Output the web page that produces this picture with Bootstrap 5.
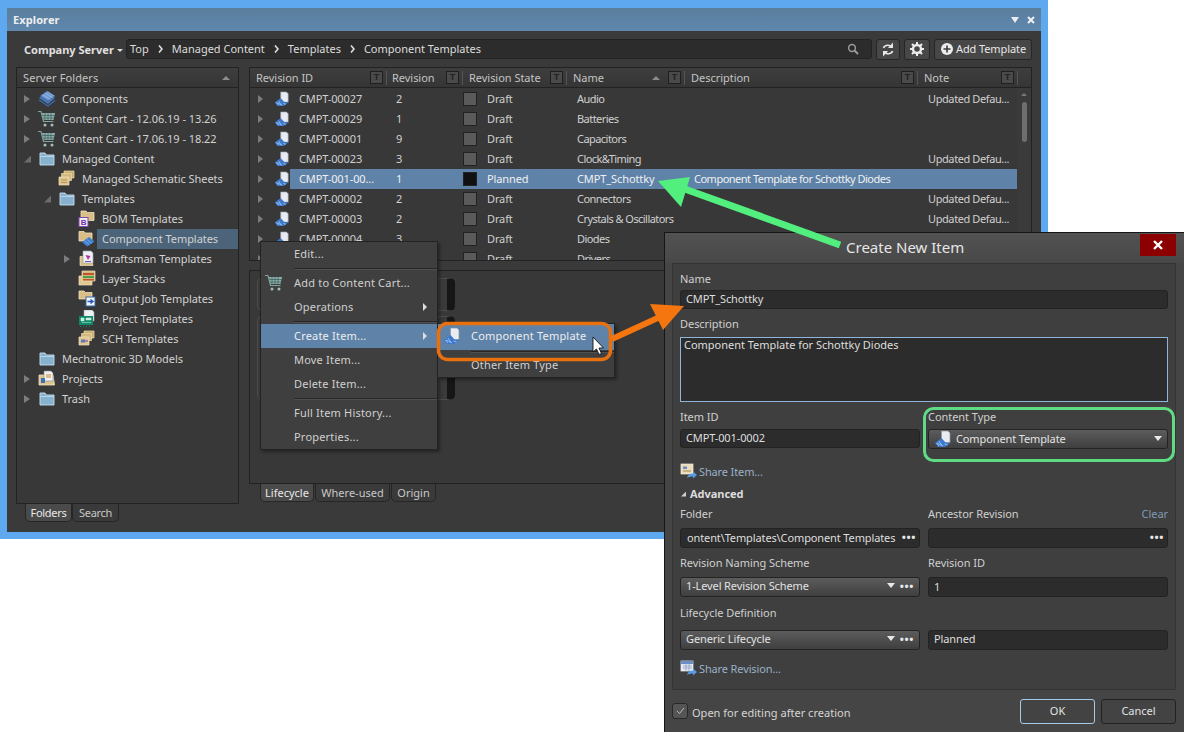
<!DOCTYPE html>
<html lang="en">
<head>
<meta charset="utf-8">
<title>Explorer</title>
<link href="https://cdn.jsdelivr.net/npm/bootstrap@5.3.0/dist/css/bootstrap.min.css" rel="stylesheet">
<style>
html,body{margin:0;background:#fff;height:732px;overflow:hidden}
body{font-family:"Noto Sans","Liberation Sans",sans-serif;font-size:11px;line-height:14px;color:#d6d6d6}
.stage{position:relative;width:1184px;height:732px;overflow:hidden}
.ico{width:18px;height:18px;flex:none;display:block}
/* Explorer window */
.explorer{position:absolute;left:0;top:0;width:1048px;height:539px;background:#5ea8ef;border:solid #5ea8ef;border-width:8px 7px 7px 7px;padding:0}
.explorer-in{height:100%;background:#3a3a3a;display:flex;flex-direction:column}
.titlebar{height:23px;flex:none;background:linear-gradient(#5a7d9c,#5f88ae);padding:0 6px;color:#eee;font-weight:700;letter-spacing:.1px}
.titlebar svg{display:block}
.tbar{height:36px;flex:none;padding:8px 9px 0 17px;gap:4px}
.server{width:98px;font-weight:700;color:#e0e0e0;letter-spacing:0;flex:none;white-space:nowrap}
.caret-sm{display:inline-block;border:3px solid transparent;border-top-color:#ddd;border-bottom:0;margin-left:3px;vertical-align:2px}
.crumb{flex:1;height:20px;background:#2c2c2c;border:1px solid #222;border-radius:3px;padding:0 12px 0 3px;color:#dcdcdc;letter-spacing:0;gap:9px}
.chev{width:5px;height:8px;flex:none;display:block}
.tb-btn{height:21px;background:#474747;border:1px solid #262626;border-radius:3px;padding:0 0 1px;color:#e6e6e6;font-size:11px;line-height:18px;--bs-btn-hover-bg:#474747}
.tb-sync{width:24px}.tb-gear{width:26px}.tb-add{width:98px;letter-spacing:-.1px;padding-left:6px;gap:3px}
.panes{flex:1;min-height:0;padding:0 9px 0 9px;gap:10px}
.pane{background:#383838;border:1px solid #222;position:relative}
.left-col{width:223px;flex:none;display:flex;flex-direction:column}
.left-pane{height:437px}
.phead{height:20px;background:linear-gradient(#3e3e3e,#353535);border-bottom:1px solid #222;padding-left:6px;color:#c4c4c4;letter-spacing:.1px}
.sort-up{width:0;height:0;border:4px solid transparent;border-bottom-color:#8c8c8c;border-top:0;display:block}
.tree{padding:1px 0 0 0;background:transparent;border-radius:0}
.tree .list-group-item{background:transparent;border:0;padding:0 0 0 7px;height:20px;color:#d2d2d2;display:flex;align-items:center;letter-spacing:-.05px;white-space:nowrap;border-radius:0}
.tree .l1{padding-left:27px}.tree .l2{padding-left:47px}
.tw{width:14px;flex:none}
.ar{display:block;width:0;height:0;border-left:6px solid #7c7c7c;border-top:4px solid transparent;border-bottom:4px solid transparent}
.ar-o{display:block;width:7px;height:7px;background:#6c6c6c;clip-path:polygon(100% 0,100% 100%,0 100%)}
.lbl{flex:1;height:20px;padding-left:5px;line-height:20px}
.tree .ico{margin-right:1px}
.sel-tree{background:#4c6479}
.tabs-b{gap:0;padding-left:9px}
.tabs-b .btn{background:#3a3a3a;border:1px solid #262626;border-top:0;border-radius:0 0 5px 5px;height:18px;padding:0;font-size:11px;line-height:16px;color:#c8c8c8}
.tabs-b .on{background:#4a4a4a;color:#e8e8e8}
.tabs-l .btn{width:47px;letter-spacing:-.3px}
.t-life{width:54px;margin-right:1px}.t-where{width:75px;margin-right:1px}.t-orig{width:45px}
.right-col{flex:1;min-width:0;position:relative}
.grid-pane{height:194px;overflow:hidden}
.gh{letter-spacing:-.03px}
.hc{flex:none;height:19px;position:relative}
.hc>span:first-child{margin-right:auto}
.tbox{width:13px;height:13px;border:1px solid #1f1f1f;background:#4a4a4a;color:#222;font-size:9px;line-height:11px;text-align:center;font-weight:700;font-style:normal;display:block;margin-right:3px;font-family:"Liberation Sans",sans-serif}
.tsep{width:1px;height:14px;background:#555;display:block}
.c0{width:137px;padding-left:6px}.c1{width:76px;padding-left:5px}.c2{width:104px;padding-left:6px}.c3{width:118px;padding-left:6px}.c4{width:233px;padding-left:6px}.c5{width:100px;padding-left:6px}
.grid-rows{padding-top:1px}
.row-g{height:20px;padding-left:8px;color:#d0d0d0;letter-spacing:-.12px;width:768px;white-space:nowrap}
.row-g .tw{width:16px}
.row-g .ar{border-left-width:5px}
.row-g .ico{width:16px;height:18px}
.cell{height:20px;line-height:20px;flex:none}
.gl{width:102px;padding-left:9px}.gr{width:67px;padding-left:4px}.gs{width:114px;padding-left:4px;display:flex;align-items:center}.gn{width:117px;padding-left:4px;letter-spacing:-.55px}.gd{width:234px;padding-left:4px;letter-spacing:-.5px}.gt{width:94px;padding-left:4px;letter-spacing:-.4px}
.sw{width:14px;height:14px;background:#5a5a5a;border:1px solid #222;margin-right:10px;flex:none}
.sel-row .cell{background:#5e82a8;color:#f0f0f0}
.sel-row .gn{letter-spacing:-.1px}
.sel-row .sw{background:#111}
.vscroll{position:absolute;right:0;top:20px;width:14px;height:173px;background:#3a3a3a}
.vscroll i{display:block;width:0;height:0;border:3px solid transparent;border-bottom-color:#777;border-top:0;margin:5px auto 6px}
.vscroll b{display:block;width:5px;height:40px;background:#6e6e6e;border-radius:3px;margin:0 auto}
.lower-pane{height:214px;margin-top:9px}
.blob{position:absolute;left:7px;width:198px;border:1px solid #4c4c4c;border-right:8px solid #161616;border-radius:5px;background:#3a3a3a}
.blob.a{top:7px;height:33px}.blob.b{top:45px;height:84px}
.tabs-r{padding-left:11px}
/* menus */
.ctx{--bs-dropdown-min-width:0;display:block;position:absolute;margin:0;padding:0;border:1px solid #232323;border-radius:0;background:#3f3f3f;box-shadow:2px 2px 3px rgba(0,0,0,.35);font-size:11px;z-index:5}
.ctx-main{left:260px;top:241px;width:178px}
.ctx-sub{left:437px;top:323px;width:178px}
.ctx .dropdown-item{height:24px;line-height:24px;padding:0 0 0 33px;color:#d0d0d0;position:relative;letter-spacing:.2px}
.ctx .active{background:#5e82a8;color:#eee}
.ctx hr{margin:2px 0 2px 33px;border:0;opacity:1;height:1px;background:#262626;box-shadow:0 1px 0 #505050}
.ctx .mi-h{height:26px;line-height:24px}
.mi-ar{position:absolute;right:10px;top:8px;border-left:4px solid #ddd;border-top:4px solid transparent;border-bottom:4px solid transparent;width:0;height:0}
.mi-ico{position:absolute;left:4px;top:3px}
.ctx-sub .dropdown-item{height:24px}
.ctx-sub .mi-h{height:26px}
.ctx-sub .mi-ico{left:5px;top:3px}
.ctx-sub hr{margin:1px 0 1px 33px}
/* dialog */
.dlg{position:absolute;left:664px;top:232px;width:520px;height:500px;background:#454545;border:1px solid #161616;border-width:1px 0 0 1px;border-radius:0;z-index:6;display:flex;flex-direction:column}
.dlg-title{height:30px;flex:none;background:linear-gradient(#525252,#484848);position:relative;text-align:center;font-size:15px;line-height:29px;color:#e6e6e6;padding:0;border:0;border-radius:0;display:block}
.dlg-title span{position:absolute;left:181px;top:0}
.dlg-x{position:absolute;left:475px;top:1px;width:36px;height:22px;background:#8b0000;border:0;border-radius:0;padding:0;display:flex;align-items:center;justify-content:center}
.dlg-body{height:427px;flex:none;margin:0 8px 0 7px;background:#3f3f3f;border:1px solid #343434;padding:8px 7px 0 7px;display:block}
.lab{margin:0;height:14px;line-height:14px;color:#cfcfcf;letter-spacing:-.05px;display:block;font-size:11px}
.fc{display:block;width:100%;height:19px;padding:0 5px 2px;background:#2c2c2c;border:1px solid #232323;border-radius:3px;color:#dedede;font-size:11px;line-height:15px;letter-spacing:-.12px;box-shadow:none;white-space:nowrap}
.fc:focus{background:#2c2c2c;color:#dedede;border-color:#232323;box-shadow:none}
.ta{height:65px;border:1px solid #8fb6da;border-radius:0;padding:0 3px;resize:none;line-height:14px;background:#2c2c2c;display:block;margin-top:6px;letter-spacing:-.02px}
.ta:focus{border-color:#8fb6da}
.sel{background:linear-gradient(#5c5c5c,#3f3f3f);border:1px solid #232323;border-radius:3px;height:20px;padding:0 5px 1px;line-height:17px;color:#e2e2e2;letter-spacing:-.12px;display:flex;align-items:center;white-space:nowrap}
.sel.f-in7,.sel.f-in10{padding-bottom:3px}
.sel .tri{width:0;height:0;border:4px solid transparent;border-top:5px solid #e8e8e8;border-bottom:0;margin-left:auto}
.dots{color:#e8e8e8;font-weight:700;letter-spacing:.6px;font-size:11px;line-height:10px;margin-left:5px}
.two{display:grid;grid-template-columns:240px 240px;column-gap:8px}
.share{color:#9ab0c8;height:20px;letter-spacing:-.13px;text-decoration:none;gap:1px}
.adv{font-weight:700;color:#dcdcdc;height:14px;letter-spacing:-.03px}
.adv i{display:block;width:5px;height:5px;background:#cfcfcf;clip-path:polygon(100% 0,100% 100%,0 100%);margin:0 4px 0 1px}
.inp-r{position:relative;padding:0 26px 2px 6px;display:flex;align-items:center;overflow:hidden;letter-spacing:-.12px;height:20px}
.inp-r .dots{position:absolute;right:3px;top:3px;letter-spacing:.6px}
.clear{color:#7f9ab5}
.m-dsc{margin-top:8px}.m-item{margin-top:8px}.f-in{margin-top:5px}.m-share{margin-top:13px}.m-adv{margin-top:5px}.m-folder{margin-top:6px}.f-in7{margin-top:7px}.m-rev{margin-top:8px}.m-life{margin-top:9px}.f-in10{margin-top:10px}.m-share2{margin-top:9px}
input.f-h20{height:20px}
input.f-in10{padding-bottom:4px}
.dlg-foot{flex:1;padding:0 8px 0 7px}
.chk{width:16px;height:16px;background:#555;border:1px solid #282828;border-radius:3px;margin:0;flex:none;display:flex;align-items:center;justify-content:center}
.ftxt{margin-top:3px;letter-spacing:.02px}
.btns{gap:6px}
.dlg-btn{width:75px;height:25px;background:#434343;border:1px solid #222;border-radius:3px;color:#e2e2e2;font-size:11px;padding:0;line-height:22px;--bs-btn-hover-bg:#434343}
.dlg-btn.pri{border-color:#a6cbe9}
.overlay{position:absolute;left:0;top:0;z-index:9;pointer-events:none}
</style>
</head>
<body>
<svg width="0" height="0" class="position-absolute">
<defs>
<symbol id="i-part" viewBox="0 0 18 18"><path d="M7.500 1h6.500L16 3v9.500H7.500z" fill="#e8ebf0" stroke="#8a96a8" stroke-width=".7"/><path d="M7.500 8 1 13l3 4h7l6-4.500-5 .5z" fill="#3d78cc"/><path d="M2.500 13 5 16M5 11 8 15.500M3 13l6 3M10.500 14l3 1" stroke="#9cc4f2" stroke-width=".9" fill="none"/></symbol>
<symbol id="i-comps" viewBox="0 0 18 18"><path d="M1 8 8 3l9 5-7 6z" fill="#4a78b8"/><path d="M2 6 9 1l8 5-7 5z" fill="#6d97d2" stroke="#2e4f82" stroke-width=".6"/><path d="M4.500 4.500l8 5M7 3l8 5M9.500 1.700l7 4.500" stroke="#b6cdeb" stroke-width=".6"/><path d="M1 10l9 6 7-5.500" stroke="#3e6aa8" stroke-width="1.400" fill="none"/></symbol>
<symbol id="i-cart" viewBox="0 0 18 18"><path d="M0 1.500h3l2.500 10h10" stroke="#7ea59f" stroke-width="1.100" fill="none"/><path d="M4 3h13l-1.500 7H5.500z" fill="#8fb1ad"/><path d="M7 3v7M10 3v7M13 3v7M4.500 5.500h12M5 8h11" stroke="#3a5a58" stroke-width=".7"/><circle cx="7" cy="15" r="1.500" fill="#a8bdbb"/><circle cx="14" cy="15" r="1.500" fill="#a8bdbb"/></symbol>
<symbol id="i-fold" viewBox="0 0 18 18"><path d="M2 3h5l1.500 2H16v10H2z" fill="#86b2cf" stroke="#c9dfee" stroke-width=".9"/><path d="M2.500 6.500h13" stroke="#b8d4e6"/></symbol>
<symbol id="i-sheets" viewBox="0 0 18 18"><path d="M6 1h10v7H6z" fill="#c8ab70" stroke="#efdcae" stroke-width=".7"/><path d="M3.500 3.500h10v7h-10z" fill="#d2b87e" stroke="#efdcae" stroke-width=".7"/><path d="M1 7h10v8H1z" fill="#dec48d" stroke="#f3e4c0" stroke-width=".7"/><path d="M3 10h6M3 12.500h6" stroke="#a98a50" stroke-width=".8"/></symbol>
<symbol id="i-bom" viewBox="0 0 18 18"><path d="M3 1h5l1.500 1.500H16v8H3z" fill="#d9bf87" stroke="#f1e2bd" stroke-width=".8"/><rect x="1" y="7.500" width="9" height="9" fill="#f0ecf6" stroke="#8048b0"/><text x="5.500" y="15" font-size="8" text-anchor="middle" font-weight="700" fill="#7030a8" font-family="Liberation Sans">B</text></symbol>
<symbol id="i-ctpl" viewBox="0 0 18 18"><path d="M1 1.500h5L7.500 3H14v8H1z" fill="#d9bf87" stroke="#f1e2bd" stroke-width=".8"/><path d="M11 7 4 12l5 4.500 7.500-5z" fill="#3f7ed0"/><path d="M6.500 11l5 4M9 9.500l5 4" stroke="#8db9ef" stroke-width=".7"/></symbol>
<symbol id="i-draft" viewBox="0 0 18 18"><path d="M2 6.500h11l2 9H2z" fill="#d9bf87" stroke="#f1e2bd" stroke-width=".7"/><path d="M5 1h8l2 2v10H5z" fill="#f0f0f4" stroke="#9aa" stroke-width=".7"/><path d="M7.500 5l5 1-2.500 4z" fill="#b0359a"/><path d="M7 11.500h6" stroke="#7a5ab0"/></symbol>
<symbol id="i-layer" viewBox="0 0 18 18"><path d="M1 6h13v9H1z" fill="#e0c68f" stroke="#f3e4c0" stroke-width=".7"/><path d="M4 1h13v10H4z" fill="#d2b87e" stroke="#f1e2bd" stroke-width=".7"/><path d="M5 3h11v2H5z" fill="#c2532f"/><path d="M5 6h11v2H5z" fill="#4f9c4f"/><path d="M5 9h11v1.500H5z" fill="#c2532f"/></symbol>
<symbol id="i-out" viewBox="0 0 18 18"><path d="M1 1h5l1.500 1.500H14V9H1z" fill="#d9bf87" stroke="#f1e2bd" stroke-width=".8"/><rect x="8" y="7" width="9" height="9" fill="#f2f4f8" stroke="#3868a8"/><path d="M9.500 11.500h5M12.500 9.500l2.500 2-2.500 2" stroke="#2458b8" stroke-width="1.400" fill="none"/></symbol>
<symbol id="i-proj" viewBox="0 0 18 18"><path d="M6 0h8l2 2v9H6z" fill="#eef0f4" stroke="#9aa" stroke-width=".6"/><rect x="1" y="6" width="14" height="9" fill="#0f8a6a"/><path d="M3 8h3v3H3zM8 8h5v2H8zM4 12.500h9" fill="#cfeee2" stroke="#cfeee2" stroke-width=".5"/><path d="M2 16.500h1M5 16.500h1M8 16.500h1M11 16.500h1" stroke="#0f8a6a"/></symbol>
<symbol id="i-sch" viewBox="0 0 18 18"><path d="M6 1h10v7H6z" fill="#c8ab70" stroke="#efdcae" stroke-width=".7"/><path d="M3.500 3.500h10v7h-10z" fill="#d2b87e" stroke="#efdcae" stroke-width=".7"/><path d="M1 7h10v8H1z" fill="#dec48d" stroke="#f3e4c0" stroke-width=".7"/><path d="M3 9.500h4v3H3z" fill="#5a78c0"/><path d="M7 11h3" stroke="#8a3aa0"/></symbol>
<symbol id="i-projs" viewBox="0 0 18 18"><path d="M1 5h14l1.500 10H1z" fill="#dcc48f" stroke="#f3e4c0" stroke-width=".8"/><path d="M6 1h7l2 2v8H6z" fill="#f0f0f4" stroke="#889" stroke-width=".6"/><path d="M3 8h4v5H3z" fill="#3f6fb8"/><path d="M8 5h5M8 7h5" stroke="#c88a20"/></symbol>
<symbol id="i-share" viewBox="0 0 18 18"><rect x="1" y="1" width="12" height="10" fill="#e8dcbc" stroke="#f5eeda" stroke-width=".7"/><path d="M3 3.500h4v2.500H3z" fill="#6b8ec8"/><path d="M3 8h8" stroke="#a98a50"/><path d="M7 15c.5-3 3-4.500 6-4.500V8.500l4 3.500-4 3.500v-2c-2.500 0-4.500.5-6 1.500z" fill="#5b9be6"/></symbol>
<symbol id="i-shrev" viewBox="0 0 18 18"><rect x="1" y="1" width="12" height="10" fill="#dfe6f2" stroke="#f2f5fa" stroke-width=".7"/><path d="M1 1h12v3H1z" fill="#6c8ec6"/><path d="M3 6h9M3 8h9M6 4v7M9 4v7" stroke="#7e92b4" stroke-width=".6"/><path d="M7 15c.5-3 3-4.500 6-4.500V8.500l4 3.500-4 3.500v-2c-2.500 0-4.500.5-6 1.500z" fill="#5b9be6"/></symbol>
<symbol id="i-chev" viewBox="0 0 5 8"><path d="M1 .5 4 4 1 7.500" fill="none" stroke="#e0e0e0" stroke-width="1.600"/></symbol>
</defs>
</svg>

<div class="stage">
<div class="explorer">
<div class="explorer-in">
  <div class="titlebar d-flex align-items-center justify-content-between">
    <span>Explorer</span>
    <span class="d-flex align-items-center gap-2">
      <svg width="8" height="6" viewBox="0 0 8 6"><path d="M0 0h8L4 6z" fill="#e8eef4"/></svg>
      <svg width="8" height="8" viewBox="0 0 8 8"><path d="M1 1l6 6M7 1 1 7" stroke="#eef2f6" stroke-width="2"/></svg>
    </span>
  </div>
  <div class="tbar d-flex align-items-start">
    <div class="server lh-lg">Company Server<span class="caret-sm"></span></div>
    <div class="crumb d-flex align-items-center">
      <span>Top</span><svg class="chev"><use href="#i-chev"/></svg><span>Managed Content</span><svg class="chev"><use href="#i-chev"/></svg><span>Templates</span><svg class="chev"><use href="#i-chev"/></svg><span>Component Templates</span>
      <svg class="ms-auto" width="12" height="12" viewBox="0 0 12 12"><circle cx="5" cy="5" r="3.400" fill="none" stroke="#9a9a9a" stroke-width="1.500"/><path d="M7.500 7.500 11 11" stroke="#9a9a9a" stroke-width="2"/></svg>
    </div>
    <button class="btn tb-btn tb-sync d-flex align-items-center justify-content-center" type="button" aria-label="Refresh"><svg width="12" height="15" viewBox="0 0 12 15"><path d="M1.500 6C2 3.500 6 2.500 8.500 4" stroke="#e8e8e8" stroke-width="1.700" fill="none"/><path d="M11 .5V6H6z" fill="#e8e8e8"/><path d="M10.500 9C10 11.500 6 12.500 3.500 11" stroke="#e8e8e8" stroke-width="1.700" fill="none"/><path d="M1 14.500V9H6z" fill="#e8e8e8"/></svg></button>
    <button class="btn tb-btn tb-gear d-flex align-items-center justify-content-center" type="button" aria-label="Settings"><svg width="14" height="14" viewBox="0 0 14 14"><circle cx="7" cy="7" r="4" fill="none" stroke="#ececec" stroke-width="2.400"/><path d="M7 0v3M7 11v3M0 7h3M11 7h3M2 2l2 2M10 10l2 2M12 2l-2 2M4 10l-2 2" stroke="#ececec" stroke-width="2"/></svg></button>
    <button class="btn tb-btn tb-add d-flex align-items-center" type="button"><svg width="12" height="12" viewBox="0 0 12 12"><circle cx="6" cy="6" r="6" fill="#ececec"/><path d="M6 2.500v7M2.500 6h7" stroke="#3c3c3c" stroke-width="1.600"/></svg>Add Template</button>
  </div>
  <div class="panes d-flex">
    <div class="left-col">
      <div class="pane left-pane">
        <div class="phead d-flex align-items-center justify-content-between"><span>Server Folders</span><span class="sort-up me-2"></span></div>
        <ul class="list-group tree">
          <li class="list-group-item"><span class="tw"><i class="ar"></i></span><svg class="ico"><use href="#i-comps"/></svg><span class="lbl">Components</span></li>
          <li class="list-group-item"><span class="tw"><i class="ar"></i></span><svg class="ico"><use href="#i-cart"/></svg><span class="lbl">Content Cart - 12.06.19 - 13.26</span></li>
          <li class="list-group-item"><span class="tw"><i class="ar"></i></span><svg class="ico"><use href="#i-cart"/></svg><span class="lbl">Content Cart - 17.06.19 - 18.22</span></li>
          <li class="list-group-item"><span class="tw"><i class="ar-o"></i></span><svg class="ico"><use href="#i-fold"/></svg><span class="lbl">Managed Content</span></li>
          <li class="list-group-item l1"><span class="tw"></span><svg class="ico"><use href="#i-sheets"/></svg><span class="lbl">Managed Schematic Sheets</span></li>
          <li class="list-group-item l1"><span class="tw"><i class="ar-o"></i></span><svg class="ico"><use href="#i-fold"/></svg><span class="lbl">Templates</span></li>
          <li class="list-group-item l2"><span class="tw"></span><svg class="ico"><use href="#i-bom"/></svg><span class="lbl">BOM Templates</span></li>
          <li class="list-group-item l2"><span class="tw"></span><svg class="ico"><use href="#i-ctpl"/></svg><span class="lbl sel-tree">Component Templates</span></li>
          <li class="list-group-item l2"><span class="tw"><i class="ar"></i></span><svg class="ico"><use href="#i-draft"/></svg><span class="lbl">Draftsman Templates</span></li>
          <li class="list-group-item l2"><span class="tw"></span><svg class="ico"><use href="#i-layer"/></svg><span class="lbl">Layer Stacks</span></li>
          <li class="list-group-item l2"><span class="tw"></span><svg class="ico"><use href="#i-out"/></svg><span class="lbl">Output Job Templates</span></li>
          <li class="list-group-item l2"><span class="tw"></span><svg class="ico"><use href="#i-proj"/></svg><span class="lbl">Project Templates</span></li>
          <li class="list-group-item l2"><span class="tw"></span><svg class="ico"><use href="#i-sch"/></svg><span class="lbl">SCH Templates</span></li>
          <li class="list-group-item"><span class="tw"></span><svg class="ico"><use href="#i-fold"/></svg><span class="lbl">Mechatronic 3D Models</span></li>
          <li class="list-group-item"><span class="tw"><i class="ar"></i></span><svg class="ico"><use href="#i-projs"/></svg><span class="lbl">Projects</span></li>
          <li class="list-group-item"><span class="tw"><i class="ar"></i></span><svg class="ico"><use href="#i-fold"/></svg><span class="lbl">Trash</span></li>
        </ul>
      </div>
      <div class="tabs-b tabs-l d-flex">
        <button class="btn on" type="button">Folders</button><button class="btn" type="button">Search</button>
      </div>
    </div>
    <div class="right-col">
      <div class="pane grid-pane">
        <div class="phead gh d-flex align-items-center p-0">
          <div class="hc c0 d-flex align-items-center"><span>Revision ID</span><i class="tbox">T</i><i class="tsep"></i></div>
          <div class="hc c1 d-flex align-items-center"><span>Revision</span><i class="tbox">T</i><i class="tsep"></i></div>
          <div class="hc c2 d-flex align-items-center"><span>Revision State</span><i class="tbox">T</i><i class="tsep"></i></div>
          <div class="hc c3 d-flex align-items-center"><span>Name</span><i class="sort-up me-2"></i><i class="tbox">T</i><i class="tsep"></i></div>
          <div class="hc c4 d-flex align-items-center"><span>Description</span><i class="tbox">T</i><i class="tsep"></i></div>
          <div class="hc c5 d-flex align-items-center"><span>Note</span><i class="tbox">T</i><i class="tsep"></i></div>
        </div>
        <div class="grid-rows">
          <div class="row-g d-flex align-items-center"><span class="tw"><i class="ar"></i></span><svg class="ico"><use href="#i-part"/></svg><span class="cell gl">CMPT-00027</span><span class="cell gr">2</span><span class="cell gs"><i class="sw"></i>Draft</span><span class="cell gn">Audio</span><span class="cell gd"></span><span class="cell gt">Updated Defau...</span></div>
          <div class="row-g d-flex align-items-center"><span class="tw"><i class="ar"></i></span><svg class="ico"><use href="#i-part"/></svg><span class="cell gl">CMPT-00029</span><span class="cell gr">1</span><span class="cell gs"><i class="sw"></i>Draft</span><span class="cell gn">Batteries</span><span class="cell gd"></span><span class="cell gt"></span></div>
          <div class="row-g d-flex align-items-center"><span class="tw"><i class="ar"></i></span><svg class="ico"><use href="#i-part"/></svg><span class="cell gl">CMPT-00001</span><span class="cell gr">9</span><span class="cell gs"><i class="sw"></i>Draft</span><span class="cell gn">Capacitors</span><span class="cell gd"></span><span class="cell gt"></span></div>
          <div class="row-g d-flex align-items-center"><span class="tw"><i class="ar"></i></span><svg class="ico"><use href="#i-part"/></svg><span class="cell gl">CMPT-00023</span><span class="cell gr">3</span><span class="cell gs"><i class="sw"></i>Draft</span><span class="cell gn">Clock&amp;Timing</span><span class="cell gd"></span><span class="cell gt">Updated Defau...</span></div>
          <div class="row-g sel-row d-flex align-items-center"><span class="tw"><i class="ar"></i></span><svg class="ico"><use href="#i-part"/></svg><span class="cell gl">CMPT-001-00...</span><span class="cell gr">1</span><span class="cell gs"><i class="sw"></i>Planned</span><span class="cell gn">CMPT_Schottky</span><span class="cell gd">Component Template for Schottky Diodes</span><span class="cell gt"></span></div>
          <div class="row-g d-flex align-items-center"><span class="tw"><i class="ar"></i></span><svg class="ico"><use href="#i-part"/></svg><span class="cell gl">CMPT-00002</span><span class="cell gr">2</span><span class="cell gs"><i class="sw"></i>Draft</span><span class="cell gn">Connectors</span><span class="cell gd"></span><span class="cell gt">Updated Defau...</span></div>
          <div class="row-g d-flex align-items-center"><span class="tw"><i class="ar"></i></span><svg class="ico"><use href="#i-part"/></svg><span class="cell gl">CMPT-00003</span><span class="cell gr">2</span><span class="cell gs"><i class="sw"></i>Draft</span><span class="cell gn">Crystals &amp; Oscillators</span><span class="cell gd"></span><span class="cell gt">Updated Defau...</span></div>
          <div class="row-g d-flex align-items-center"><span class="tw"><i class="ar"></i></span><svg class="ico"><use href="#i-part"/></svg><span class="cell gl">CMPT-00004</span><span class="cell gr">3</span><span class="cell gs"><i class="sw"></i>Draft</span><span class="cell gn">Diodes</span><span class="cell gd"></span><span class="cell gt"></span></div>
          <div class="row-g d-flex align-items-center"><span class="tw"><i class="ar"></i></span><svg class="ico"><use href="#i-part"/></svg><span class="cell gl">CMPT-00005</span><span class="cell gr">3</span><span class="cell gs"><i class="sw"></i>Draft</span><span class="cell gn">Drivers</span><span class="cell gd"></span><span class="cell gt"></span></div>
        </div>
        <div class="vscroll"><i></i><b></b></div>
      </div>
      <div class="pane lower-pane">
        <div class="blob a"></div><div class="blob b"></div>
      </div>
      <div class="tabs-b tabs-r d-flex">
        <button class="btn on t-life" type="button">Lifecycle</button><button class="btn t-where" type="button">Where-used</button><button class="btn t-orig" type="button">Origin</button>
      </div>
    </div>
  </div>
</div>
</div>

<ul class="dropdown-menu ctx ctx-main">
  <li><a class="dropdown-item" href="#">Edit...</a></li>
  <li><hr></li>
  <li><a class="dropdown-item" href="#"><svg class="ico mi-ico"><use href="#i-cart"/></svg>Add to Content Cart...</a></li>
  <li><a class="dropdown-item" href="#">Operations<i class="mi-ar"></i></a></li>
  <li><hr></li>
  <li><a class="dropdown-item active" href="#">Create Item...<i class="mi-ar"></i></a></li>
  <li><a class="dropdown-item" href="#">Move Item...</a></li>
  <li><a class="dropdown-item" href="#">Delete Item...</a></li>
  <li><hr></li>
  <li><a class="dropdown-item" href="#">Full Item History...</a></li>
  <li><a class="dropdown-item" href="#">Properties...</a></li>
</ul>
<ul class="dropdown-menu ctx ctx-sub">
  <li><a class="dropdown-item active mi-h" href="#"><svg class="ico mi-ico"><use href="#i-part"/></svg>Component Template</a></li>
  <li><hr></li>
  <li><a class="dropdown-item" href="#">Other Item Type</a></li>
</ul>

<div class="modal-content dlg">
  <div class="modal-header dlg-title"><span>Create New Item</span><button class="dlg-x" type="button" aria-label="Close"><svg width="10" height="10" viewBox="0 0 10 10"><path d="M1 1l8 8M9 1 1 9" stroke="#fff" stroke-width="2.400"/></svg></button></div>
  <div class="modal-body dlg-body">
    <label class="lab">Name</label>
    <input class="form-control fc mt-1" value="CMPT_Schottky">
    <label class="lab m-dsc">Description</label>
    <textarea class="form-control fc ta">Component Template for Schottky Diodes</textarea>
    <div class="two m-item">
      <div><label class="lab">Item ID</label><input class="form-control fc f-in" value="CMPT-001-0002"></div>
      <div><label class="lab">Content Type</label><div class="sel f-in"><svg class="ico me-1"><use href="#i-part"/></svg>Component Template<span class="tri"></span></div></div>
    </div>
    <a class="share d-flex align-items-center m-share" href="#"><svg class="ico"><use href="#i-share"/></svg>Share Item...</a>
    <div class="adv d-flex align-items-center m-adv"><i></i>Advanced</div>
    <div class="two m-folder">
      <div><label class="lab">Folder</label><div class="fc inp-r f-in7">ontent\Templates\Component Templates<span class="dots">•••</span></div></div>
      <div><label class="lab d-flex justify-content-between">Ancestor Revision<span class="clear">Clear</span></label><div class="fc inp-r f-in7"><span class="dots">•••</span></div></div>
    </div>
    <div class="two m-rev">
      <div><label class="lab">Revision Naming Scheme</label><div class="sel f-in7"><span>1-Level Revision Scheme</span><span class="tri"></span><span class="dots">•••</span></div></div>
      <div><label class="lab">Revision ID</label><input class="form-control fc f-in7 f-h20" value="1"></div>
    </div>
    <div class="two m-life">
      <div><label class="lab">Lifecycle Definition</label><div class="sel f-in10"><span>Generic Lifecycle</span><span class="tri"></span><span class="dots">•••</span></div></div>
      <div><label class="lab">&nbsp;</label><input class="form-control fc f-in10 f-h20" value="Planned"></div>
    </div>
    <a class="share d-flex align-items-center m-share2" href="#"><svg class="ico"><use href="#i-shrev"/></svg>Share Revision...</a>
  </div>
  <div class="modal-footer dlg-foot d-flex align-items-center justify-content-between flex-nowrap">
    <div class="d-flex align-items-center gap-1 m-0"><span class="chk"><svg width="9" height="8" viewBox="0 0 9 8"><path d="M1 4l2.500 2.500L8 1" stroke="#bbb" fill="none"/></svg></span><span class="ftxt">Open for editing after creation</span></div>
    <div class="d-flex btns m-0"><button class="btn dlg-btn pri" type="button">OK</button><button class="btn dlg-btn" type="button">Cancel</button></div>
  </div>
</div>

<svg class="overlay" width="1184" height="732" viewBox="0 0 1184 732">
  <path d="M840 245 682 188" stroke="#52ee7e" stroke-width="7" fill="none"/>
  <path d="M658 181 690 177 681 207z" fill="#52ee7e"/>
  <rect x="924.500" y="408.500" width="249" height="52" rx="9" fill="none" stroke="#5fdc83" stroke-width="3"/>
  <rect x="438.500" y="323.500" width="172" height="36" rx="9" fill="none" stroke="#e9700f" stroke-width="3.500"/>
  <path d="M612 339 662 316" stroke="#f5760f" stroke-width="6" fill="none"/>
  <path d="M650 304 684 306 663 330z" fill="#f5760f"/>
  <path d="M593 337V352l3.500-3 2.500 5.500 2.500-1-2.500-5.500h4.500z" fill="#fff" stroke="#111" stroke-width=".9"/>
</svg>
</div>
</body>
</html>
